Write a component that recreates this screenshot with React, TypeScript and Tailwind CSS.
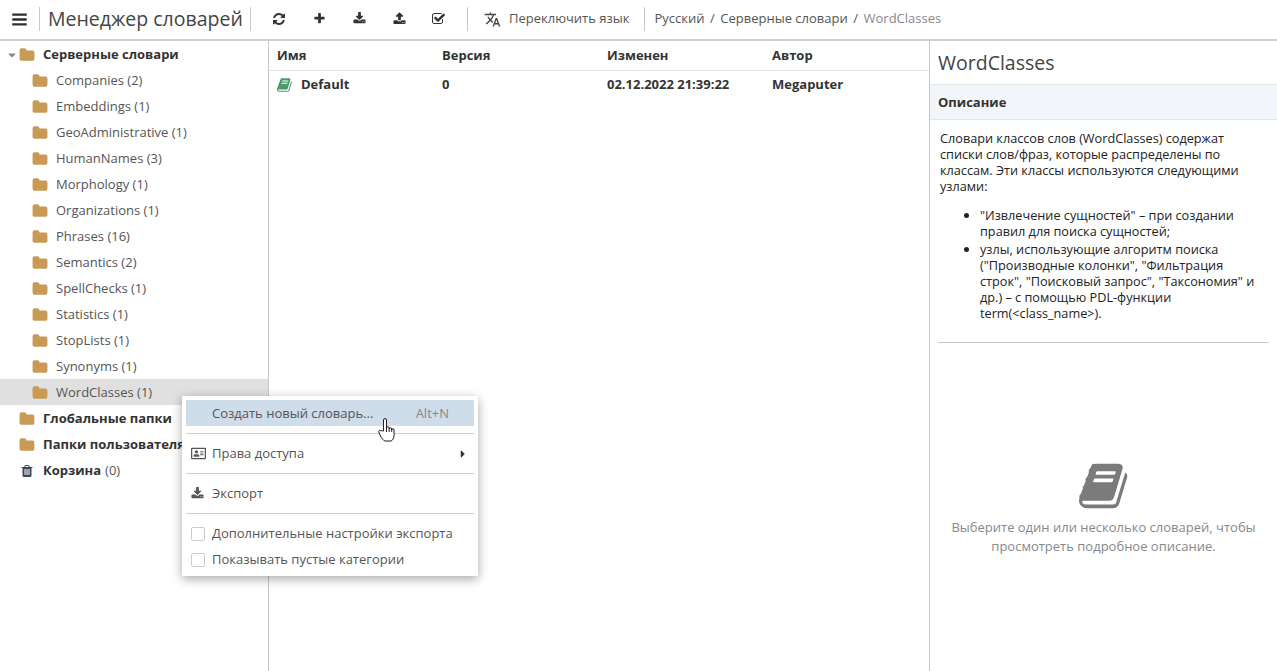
import { FaCaretDown, FaCaretRight, FaRegAddressCard } from 'react-icons/fa';
import { MdTranslate } from 'react-icons/md';

const BOOK =
  'M1639 478q40 57 18 129l-275 906q-19 64-76.5 107.5t-122.5 43.5h-923q-77 0-148.5-53.5t-99.5-131.5q-24-67-2-127 0-4 3-27t4-37q1-8-3-21.5t-3-19.5q2-11 8-21t16.5-23.5 16.5-23.5q23-38 45-91.5t30-91.5q3-10 .5-30t-.5-28q3-11 17-28t17-23q21-36 42-92t25-90q1-9-2.5-32t.5-28q4-13 22-30.5t22-22.5q19-26 42.5-84.5t27.5-96.5q1-8-3-25.5t-2-26.5q2-8 9-18t18-23 17-21q8-12 16.5-30.5t15-35 16-36 19.5-32 26.5-23.5 36-11.5 47.5 5.5l-1 3q38-9 51-9h761q74 0 114 56t18 130l-274 906q-36 119-71.5 153.5t-128.5 34.5h-869q-27 0-38 15-11 16-1 43 24 70 144 70h923q29 0 56-15.5t35-41.5l300-987q7-22 5-57 38 15 59 43zm-1064 2q-4 13 2 22.5t20 9.5h608q13 0 25.5-9.5t16.5-22.5l21-64q4-13-2-22.5t-20-9.5h-608q-13 0-25.5 9.5t-16.5 22.5zm-83 256q-4 13 2 22.5t20 9.5h608q13 0 25.5-9.5t16.5-22.5l21-64q4-13-2-22.5t-20-9.5h-608q-13 0-25.5 9.5t-16.5 22.5z';
const REFRESH =
  'M1639 1056q0 5-1 7-64 268-268 434.5t-478 166.5q-146 0-282.5-55t-243.5-157l-129 129q-19 19-45 19t-45-19-19-45v-448q0-26 19-45t45-19h448q26 0 45 19t19 45-19 45l-137 137q71 66 161 102t187 36q134 0 250-65t186-179q11-17 53-117 8-23 30-23h192q13 0 22.5 9.5t9.5 22.5zm25-800v448q0 26-19 45t-45 19h-448q-26 0-45-19t-19-45 19-45l138-138q-148-137-349-137-134 0-250 65t-186 179q-11 17-53 117-8 23-30 23h-199q-13 0-22.5-9.5t-9.5-22.5v-7q65-268 270-434.5t480-166.5q146 0 284 55.5t245 156.5l130-129q19-19 45-19t45 19 19 45z';
const PLUS =
  'M1600 736v192q0 40-28 68t-68 28h-416v416q0 40-28 68t-68 28h-192q-40 0-68-28t-28-68v-416h-416q-40 0-68-28t-28-68v-192q0-40 28-68t68-28h416v-416q0-40 28-68t68-28h192q40 0 68 28t28 68v416h416q40 0 68 28t28 68z';
const DOWNLOAD =
  'M1344 1344q0-26-19-45t-45-19-45 19-19 45 19 45 45 19 45-19 19-45zm256 0q0-26-19-45t-45-19-45 19-19 45 19 45 45 19 45-19 19-45zm128-224v320q0 40-28 68t-68 28h-1472q-40 0-68-28t-28-68v-320q0-40 28-68t68-28h465l135 136q58 56 136 56t136-56l136-136h464q40 0 68 28t28 68zm-325-569q17 41-14 70l-448 448q-18 19-45 19t-45-19l-448-448q-31-29-14-70 17-39 59-39h256v-448q0-26 19-45t45-19h256q26 0 45 19t19 45v448h256q42 0 59 39z';
const UPLOAD =
  'M1344 1472q0-26-19-45t-45-19-45 19-19 45 19 45 45 19 45-19 19-45zm256 0q0-26-19-45t-45-19-45 19-19 45 19 45 45 19 45-19 19-45zm128-224v320q0 40-28 68t-68 28h-1472q-40 0-68-28t-28-68v-320q0-40 28-68t68-28h427q21 56 70.5 92t110.5 36h256q61 0 110.5-36t70.5-92h427q40 0 68 28t28 68zm-325-648q-17 40-59 40h-256v448q0 26-19 45t-45 19h-256q-26 0-45-19t-19-45v-448h-256q-42 0-59-40-17-39 14-69l448-448q18-19 45-19t45 19l448 448q31 30 14 69z';
const CHECK_SQUARE =
  'M1408 930v318q0 119-84.5 203.5t-203.5 84.5h-832q-119 0-203.5-84.5t-84.5-203.5v-832q0-119 84.5-203.5t203.5-84.5h832q63 0 117 25 15 7 18 23 3 17-9 29l-49 49q-10 10-23 10-3 0-9-2-23-6-45-6h-832q-66 0-113 47t-47 113v832q0 66 47 113t113 47h832q66 0 113-47t47-113v-254q0-13 9-22l64-64q10-10 23-10 6 0 12 3 20 8 20 29zm231-489l-814 814q-24 24-57 24t-57-24l-430-430q-24-24-24-57t24-57l110-110q24-24 57-24t57 24l263 263 647-647q24-24 57-24t57 24l110 110q24 24 24 57t-24 57z';
const BARS =
  'M1664 1344v128q0 26-19 45t-45 19h-1408q-26 0-45-19t-19-45v-128q0-26 19-45t45-19h1408q26 0 45 19t19 45zm0-512v128q0 26-19 45t-45 19h-1408q-26 0-45-19t-19-45v-128q0-26 19-45t45-19h1408q26 0 45 19t19 45zm0-512v128q0 26-19 45t-45 19h-1408q-26 0-45-19t-19-45v-128q0-26 19-45t45-19h1408q26 0 45 19t19 45z';
const FOLDER =
  'M1728 608v704q0 92-66 158t-158 66h-1216q-92 0-158-66t-66-158v-960q0-92 66-158t158-66h320q92 0 158 66t66 158v32h672q92 0 158 66t66 158z';
const TRASH =
  'M704 1376v-704q0-14-9-23t-23-9h-64q-14 0-23 9t-9 23v704q0 14 9 23t23 9h64q14 0 23-9t9-23zm256 0v-704q0-14-9-23t-23-9h-64q-14 0-23 9t-9 23v704q0 14 9 23t23 9h64q14 0 23-9t9-23zm256 0v-704q0-14-9-23t-23-9h-64q-14 0-23 9t-9 23v704q0 14 9 23t23 9h64q14 0 23-9t9-23zm-544-992h448l-48-117q-7-9-17-11h-317q-10 2-17 11zm928 32v64q0 14-9 23t-23 9h-96v948q0 83-47 143.5t-113 60.5h-832q-66 0-113-58.5t-47-141.5v-952h-96q-14 0-23-9t-9-23v-64q0-14 9-23t23-9h309l70-167q15-37 54-63t79-26h320q40 0 79 26t54 63l70 167h309q14 0 23 9t9 23z';

const folders = [
  'Companies (2)',
  'Embeddings (1)',
  'GeoAdministrative (1)',
  'HumanNames (3)',
  'Morphology (1)',
  'Organizations (1)',
  'Phrases (16)',
  'Semantics (2)',
  'SpellChecks (1)',
  'Statistics (1)',
  'StopLists (1)',
  'Synonyms (1)',
  'WordClasses (1)',
];

function Glyph({ d, className }: { d: string; className?: string }) {
  return (
    <svg viewBox="0 0 1792 1792" className={className} fill="currentColor">
      <path d={d} />
    </svg>
  );
}

function Divider() {
  return <div className="h-6 w-px bg-[#c8c8c8]" />;
}

function Toolbar() {
  const buttons = [
    <Glyph key="r" d={REFRESH} className="h-[14px] w-[14px]" />,
    <Glyph key="p" d={PLUS} className="h-[13px] w-[13px]" />,
    <Glyph key="d" d={DOWNLOAD} className="h-[13px] w-[13px]" />,
    <Glyph key="u" d={UPLOAD} className="h-[13px] w-[13px]" />,
    <Glyph key="c" d={CHECK_SQUARE} className="h-[14px] w-[14px]" />,
  ];
  return (
    <header className="flex h-[41px] shrink-0 items-center border-b-2 border-[#d0d0d0] pb-px text-[#333]">
      <div className="flex w-[39px] justify-center pr-[1px]">
        <Glyph d={BARS} className="h-[17px] w-[17px] text-[#2e2e2e]" />
      </div>
      <Divider />
      <h1 className="ml-2 w-[202px] text-[19.5px] whitespace-nowrap text-[#444]">Менеджер словарей</h1>
      <Divider />
      <div className="ml-2 flex">
        {buttons.map((b) => (
          <div key={b.key} className="flex w-10 justify-center">
            {b}
          </div>
        ))}
      </div>
      <div className="ml-2">
        <Divider />
      </div>
      <MdTranslate className="ml-4 h-[17px] w-[17px] text-[#444]" />
      <span className="ml-[8px] text-[13px] text-[#555]">Переключить язык</span>
      <div className="ml-[15px]">
        <Divider />
      </div>
      <nav className="ml-[9px] flex text-[13px] whitespace-nowrap text-[#555]">
        <span>Русский</span>
        <span className="mx-[5.5px]">/</span>
        <span>Серверные словари</span>
        <span className="mx-[5.5px]">/</span>
        <span className="text-[#888]">WordClasses</span>
      </nav>
    </header>
  );
}

function TopNode({ label, count, caret, trash }: { label: string; count?: string; caret?: boolean; trash?: boolean }) {
  return (
    <div className="flex h-[26px] items-center pt-px whitespace-nowrap">
      <div className="flex w-[19px] justify-end pr-[2px]">{caret && <FaCaretDown className="h-3 w-[10px] text-[#888]" />}</div>
      {trash ? (
        <div className="flex w-[16px] justify-center">
          <Glyph d={TRASH} className="h-[14px] w-[14px] text-[#3f4658]" />
        </div>
      ) : (
        <Glyph d={FOLDER} className="h-4 w-4 text-[#c89a54]" />
      )}
      <span className="ml-2 text-[13px] font-bold text-[#333]">{label}</span>
      {count && <span className="ml-1 text-[13px] text-[#555]">{count}</span>}
    </div>
  );
}

function Tree() {
  return (
    <aside className="w-[269px] shrink-0 border-r border-[#c8c8c8]">
      <TopNode label="Серверные словари" caret />
      {folders.map((name) => (
        <div
          key={name}
          className={`flex h-[26px] items-center pt-px pl-[32px] text-[13px] text-[#555] ${name.startsWith('WordClasses') ? 'bg-[#e0e0e0]' : ''}`}
        >
          <Glyph d={FOLDER} className="h-4 w-4 text-[#c89a54]" />
          <span className="ml-2">{name}</span>
        </div>
      ))}
      <TopNode label="Глобальные папки" />
      <TopNode label="Папки пользователя" />
      <TopNode label="Корзина" count="(0)" trash />
    </aside>
  );
}

function Table() {
  const cols = 'grid grid-cols-[165px_165px_165px_165px] pl-2 text-[13px] font-bold text-[#333]';
  return (
    <main className="min-w-0 flex-1 border-r border-[#c8c8c8]">
      <div className={`${cols} h-[30px] items-center border-b border-[#e2e6ea]`}>
        <span>Имя</span>
        <span>Версия</span>
        <span>Изменен</span>
        <span>Автор</span>
      </div>
      <div className={`${cols} h-[27px] items-center`}>
        <span className="flex items-center">
          <Glyph d={BOOK} className="h-[16px] w-[16px] text-[#4c9a6c]" />
          <span className="ml-2">Default</span>
        </span>
        <span>0</span>
        <span>02.12.2022 21:39:22</span>
        <span>Megaputer</span>
      </div>
    </main>
  );
}

function Details() {
  return (
    <section className="flex w-[347px] shrink-0 flex-col">
      <h2 className="flex h-[44px] items-center border-b border-[#e2e6ea] pl-2 text-[19.5px] text-[#444]">WordClasses</h2>
      <h3 className="flex h-[35px] items-center border-b border-[#e2e6ea] bg-[#f2f5fa] pt-px pl-2 text-[13px] font-bold text-[#333]">Описание</h3>
      <div className="mx-2 border-b border-[#c8c8c8] pt-[10px] pb-[21px] pl-[2px] text-[12.7px] leading-4 text-[#222]">
        <p className="w-[320px]">
          Словари классов слов (WordClasses) содержат списки слов/фраз, которые распределены по классам. Эти классы используются следующими узлами:
        </p>
        <ul className="mt-[13px] list-disc pr-[12px] pl-[40px]">
          <li>"Извлечение сущностей" – при создании правил для поиска сущностей;</li>
          <li className="mt-[2px]">
            узлы, использующие алгоритм поиска ("Производные колонки", "Фильтрация строк", "Поисковый запрос", "Таксономия" и др.) – с помощью PDL-функции term(&lt;class_name&gt;).
          </li>
        </ul>
      </div>
      <div className="flex flex-1 flex-col items-center pt-[117px] text-center text-[13px] leading-[19px] text-[#888]">
        <Glyph d={BOOK} className="mb-[6px] ml-[2px] h-[52px] w-[52px] text-[#7b7b7b]" />
        <p className="w-[320px]">Выберите один или несколько словарей, чтобы просмотреть подробное описание.</p>
      </div>
    </section>
  );
}

function HandCursor() {
  return (
    <svg viewBox="0 0 17 24" className="absolute top-[22px] left-[196px] h-6 w-[17px]" fill="#fff" stroke="#222" strokeWidth="1" strokeLinejoin="round">
      <path d="M5.5 13V2a1.5 1.5 0 0 1 3 0v8a1.3 1.3 0 0 1 2.6 0v1a1.3 1.3 0 0 1 2.6 0v1a1.2 1.2 0 0 1 2.4 0v5c0 3-1.5 5.5-3 6H7c-2-.5-3-2.5-4.5-5L.8 14c-.6-1.2 1-2.3 2-1.3z" />
      <path d="M8.5 10v4M11.1 11v3M13.7 12v2" fill="none" />
    </svg>
  );
}

function ContextMenu() {
  const sep = <div className="mt-[7px] mb-[6px] h-px bg-[#cfcfcf]" />;
  const row = 'flex h-[26px] items-center pt-px pl-[5px] text-[13px] text-[#555]';
  const box = <span className="h-[14px] w-[14px] rounded-[2px] border border-[#ccc] bg-white" />;
  return (
    <div className="absolute top-[396px] left-[182px] w-[296px] bg-white p-1 shadow-[0_3px_10px_rgba(0,0,0,0.35)]">
      <div className={`${row} justify-between bg-[#cfdce9] pr-[25px] pl-[26px]`}>
        <span>Создать новый словарь...</span>
        <span className="text-[#888]">Alt+N</span>
      </div>
      {sep}
      <div className={row}>
        <FaRegAddressCard className="h-[15px] w-[15px] text-[#555]" />
        <span className="ml-[6px] flex-1">Права доступа</span>
        <FaCaretRight className="mr-[7px] h-3 w-[8px] text-[#333]" />
      </div>
      {sep}
      <div className={row}>
        <Glyph d={DOWNLOAD} className="h-[13px] w-[13px] text-[#555]" />
        <span className="ml-2">Экспорт</span>
      </div>
      {sep}
      <div className={row}>
        {box}
        <span className="ml-[7px]">Дополнительные настройки экспорта</span>
      </div>
      <div className={row}>
        {box}
        <span className="ml-[7px]">Показывать пустые категории</span>
      </div>
      <HandCursor />
    </div>
  );
}

export default function App() {
  return (
    <div className="relative flex h-[671px] w-[1277px] flex-col overflow-hidden bg-white font-['Open_Sans',sans-serif]">
      <Toolbar />
      <div className="flex min-h-0 flex-1">
        <Tree />
        <Table />
        <Details />
      </div>
      <ContextMenu />
    </div>
  );
}
